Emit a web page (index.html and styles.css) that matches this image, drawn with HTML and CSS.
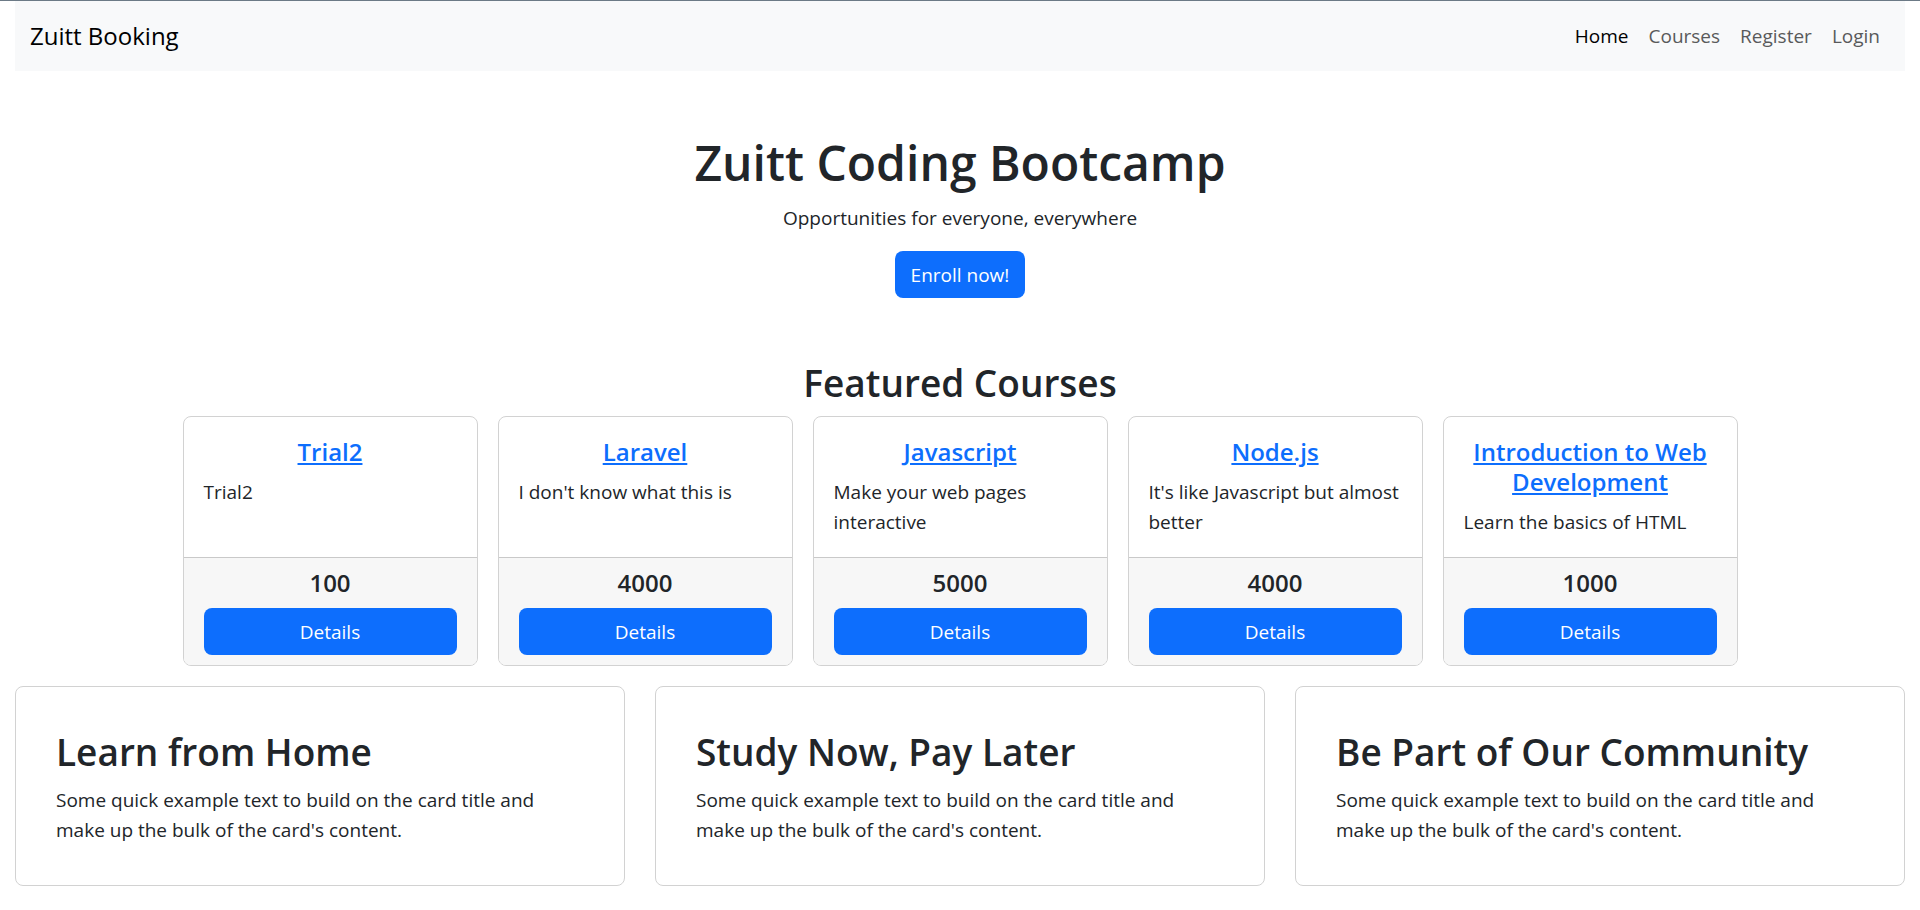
FILE: index.html
```html
<!DOCTYPE html>
<html lang="en">
<head>
<meta charset="utf-8">
<meta name="viewport" content="width=device-width, initial-scale=1">
<title>Zuitt Booking</title>
<link rel="stylesheet" href="styles.css">
</head>
<body>
<div class="container">
  <nav class="navbar">
    <a class="brand" href="#">Zuitt Booking</a>
    <div class="nav-links">
      <a class="nav-link active" href="#">Home</a>
      <a class="nav-link" href="#">Courses</a>
      <a class="nav-link" href="#">Register</a>
      <a class="nav-link" href="#">Login</a>
    </div>
  </nav>
  <header class="hero">
    <h1 class="hero-title">Zuitt Coding Bootcamp</h1>
    <p class="hero-text">Opportunities for everyone, everywhere</p>
    <a class="btn" href="#">Enroll now!</a>
  </header>
  <main>
    <h2 class="section-title">Featured Courses</h2>
    <div class="courses">
      <article class="card">
        <div class="card-body"><h3 class="card-title"><a href="#">Trial2</a></h3><p>Trial2</p></div>
        <div class="card-footer"><p class="price">100</p><a class="btn" href="#">Details</a></div>
      </article>
      <article class="card">
        <div class="card-body"><h3 class="card-title"><a href="#">Laravel</a></h3><p>I don't know what this is</p></div>
        <div class="card-footer"><p class="price">4000</p><a class="btn" href="#">Details</a></div>
      </article>
      <article class="card">
        <div class="card-body"><h3 class="card-title"><a href="#">Javascript</a></h3><p>Make your web pages interactive</p></div>
        <div class="card-footer"><p class="price">5000</p><a class="btn" href="#">Details</a></div>
      </article>
      <article class="card">
        <div class="card-body"><h3 class="card-title"><a href="#">Node.js</a></h3><p>It's like Javascript but almost better</p></div>
        <div class="card-footer"><p class="price">4000</p><a class="btn" href="#">Details</a></div>
      </article>
      <article class="card">
        <div class="card-body"><h3 class="card-title"><a href="#">Introduction to Web Development</a></h3><p>Learn the basics of HTML</p></div>
        <div class="card-footer"><p class="price">1000</p><a class="btn" href="#">Details</a></div>
      </article>
    </div>
    <div class="highlights">
      <article class="card highlight"><h2 class="highlight-title">Learn from Home</h2><p>Some quick example text to build on the card title and make up the bulk of the card's content.</p></article>
      <article class="card highlight"><h2 class="highlight-title">Study Now, Pay Later</h2><p>Some quick example text to build on the card title and make up the bulk of the card's content.</p></article>
      <article class="card highlight"><h2 class="highlight-title">Be Part of Our Community</h2><p>Some quick example text to build on the card title and make up the bulk of the card's content.</p></article>
    </div>
  </main>
</div>
</body>
</html>
```
FILE: styles.css
```css
* { box-sizing: border-box; }
body {
  margin: 0;
  border-top: 1px solid #6c7a86;
  background: #fff;
  color: #212529;
  font-family: "Segoe UI", "Open Sans", "Noto Sans", sans-serif;
  font-size: 19px;
  line-height: 30px;
}
h1, h2, h3, p { margin: 0; }
h1, h2, h3 { font-weight: 600; }
.container { padding: 0 15px; }
.navbar {
  display: flex;
  justify-content: space-between;
  align-items: center;
  padding: 10px 15px;
  background: #f8f9fa;
}
.brand { color: #000; font-size: 24px; text-decoration: none; }
.nav-links { display: flex; }
.nav-link { padding: 10px; color: #595a5a; text-decoration: none; }
.nav-link.active { color: #000; }
.hero {
  display: flex;
  flex-direction: column;
  align-items: center;
  padding: 60px 15px;
  text-align: center;
}
.hero-title { margin-bottom: 8px; font-size: 48px; line-height: 64px; }
.hero-text { margin-bottom: 18px; }
.btn {
  display: block;
  padding: 9px 16px 8px;
  border-radius: 8px;
  background: #0d6efd;
  color: #fff;
  text-align: center;
  text-decoration: none;
}
.section-title { margin-bottom: 9px; font-size: 37px; line-height: 49px; text-align: center; }
.courses {
  display: grid;
  grid-template-columns: repeat(5, 1fr);
  gap: 20px;
  width: calc(100% * 5 / 6);
  margin: 0 auto 20px;
  padding: 0 10px;
}
.card {
  display: flex;
  flex-direction: column;
  overflow: hidden;
  border: 1px solid #d2d2d2;
  border-radius: 8px;
  background: #fff;
}
.card-body { flex: 1; padding: 20px; }
.card-title { margin-bottom: 10px; font-size: 24px; text-align: center; }
.card-title a { color: #0d6efd; }
.card-footer { padding: 10px 20px; border-top: 1px solid #c9c9c9; background: #f7f7f7; }
.price { margin-bottom: 10px; font-size: 24px; font-weight: 600; text-align: center; }
.highlights { display: grid; grid-template-columns: repeat(3, 1fr); gap: 30px; }
.highlight { padding: 40px; }
.highlight-title { margin-bottom: 9px; font-size: 37px; line-height: 49px; }
```
